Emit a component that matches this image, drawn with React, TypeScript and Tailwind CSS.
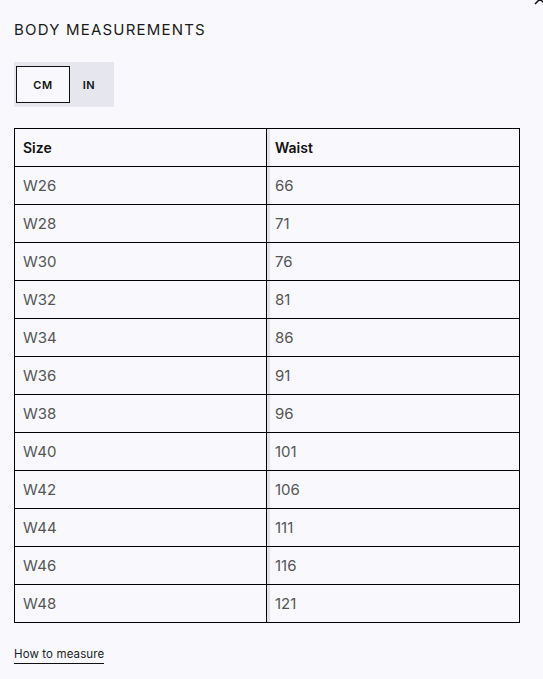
const sizes = [
  ["W26", "66"],
  ["W28", "71"],
  ["W30", "76"],
  ["W32", "81"],
  ["W34", "86"],
  ["W36", "91"],
  ["W38", "96"],
  ["W40", "101"],
  ["W42", "106"],
  ["W44", "111"],
  ["W46", "116"],
  ["W48", "121"],
];

export default function App() {
  return (
    <div className="relative min-h-[679px] w-[543px] overflow-hidden bg-[#f9f9fd] px-[14px] font-['Inter',sans-serif] text-[#111]">
      {/* close icon peeking at top right */}
      <svg className="absolute right-[-4px] top-[-8px]" width="14" height="14" viewBox="0 0 14 14">
        <path d="M2 2 L12 12 M12 2 L2 12" stroke="#111" strokeWidth="1.5" />
      </svg>

      <h1 className="pt-[20px] text-[15px] leading-[19px] tracking-[0.08em] text-[#1a1a1a]">BODY MEASUREMENTS</h1>

      <div className="mt-[23px] flex h-[45px] w-[100px] items-center bg-[#e6e6ef] px-[2px]">
        <button className="h-[37px] w-[54px] border border-[#111] bg-[#f9f9fd] pt-[1px] text-[11px] font-semibold tracking-[0.06em]">
          CM
        </button>
        <button className="h-[37px] w-[38px] pt-[2px] text-[11px] font-semibold tracking-[0.06em]">IN</button>
      </div>

      <table className="mt-[21px] w-[506px] border-collapse border border-[#000] text-[15px]">
        <thead>
          <tr className="h-[38px]">
            <th className="w-[252px] border border-[#000] px-[8px] text-left text-[14px] font-semibold">Size</th>
            <th className="border border-[#000] px-[8px] text-left text-[14px] font-semibold shadow-[inset_3px_0_0_#e2e2e8]">
              Waist
            </th>
          </tr>
        </thead>
        <tbody>
          {sizes.map(([size, waist]) => (
            <tr key={size} className="h-[38px] text-[#555]">
              <td className="border border-[#000] px-[8px] pt-[1px]">{size}</td>
              <td className="border border-[#000] px-[8px] pt-[1px] shadow-[inset_3px_0_0_#e2e2e8]">{waist}</td>
            </tr>
          ))}
        </tbody>
      </table>

      <a className="mt-[24px] inline-block border-b border-[#111] pb-[2px] text-[11.5px] leading-[14px] tracking-[0.01em] text-[#222]">
        How to measure
      </a>
    </div>
  );
}
